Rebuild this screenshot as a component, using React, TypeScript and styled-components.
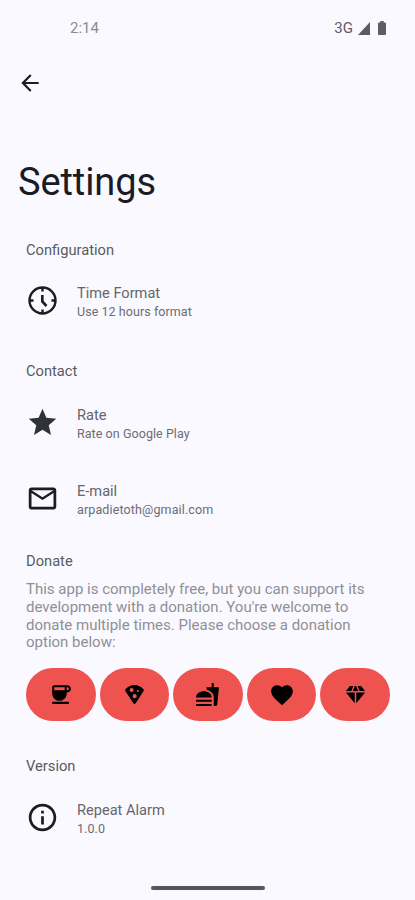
import React from "react";
import styled, { createGlobalStyle } from "styled-components";
import {
  MdArrowBack,
  MdStar,
  MdMailOutline,
  MdInfoOutline,
  MdCoffee,
  MdFastfood,
  MdFavorite,
} from "react-icons/md";

const GlobalStyle = createGlobalStyle`
  * { box-sizing: border-box; }
  body { margin: 0; background: #f9f9ff; }
  h1, h2, p { margin: 0; font-weight: 400; }
`;

const Screen = styled.main`
  width: 415px;
  height: 900px;
  display: flex;
  flex-direction: column;
  overflow: hidden;
  background: #f9f9ff;
  color: #191c24;
  font-family: Roboto, sans-serif;
`;

const StatusBar = styled.header`
  height: 56px;
  padding: 0 29px 0 70px;
  display: flex;
  align-items: center;
  justify-content: space-between;
  font-size: 15px;
  color: #8b8c90;
`;

const StatusIcons = styled.div`
  display: flex;
  align-items: center;
  gap: 8px;
  color: #5c5d62;
  svg { display: block; }
`;

const Network = styled.span`
  margin-right: -3px;
`;

const TopBar = styled.nav`
  height: 53px;
  padding-left: 17px;
  display: flex;
  align-items: center;
`;

const BackButton = styled.button`
  display: flex;
  padding: 0;
  border: 0;
  background: none;
  color: #1b1d25;
  cursor: pointer;
`;

const Title = styled.h1`
  margin-top: 47px;
  padding-left: 18px;
  height: 52px;
  font-size: 38px;
  line-height: 52px;
  letter-spacing: -0.1px;
`;

const SectionTitle = styled.h2<{ $top: number }>`
  margin-top: ${(p) => p.$top}px;
  padding-left: 26px;
  height: 20px;
  font-size: 14.7px;
  line-height: 20px;
  color: #5a5b60;
`;

const Item = styled.div<{ $top: number }>`
  margin-top: ${(p) => p.$top}px;
  height: 40px;
  padding-left: 26px;
  display: flex;
  align-items: center;
  gap: 18px;
`;

const ItemIcon = styled.span`
  width: 33px;
  display: flex;
  padding-bottom: 3px;
  svg { display: block; }
`;

const ItemTitle = styled.p`
  font-size: 14.6px;
  line-height: 19px;
  color: #65666b;
`;

const ItemDetail = styled.p<{ $spacing?: number }>`
  font-size: 12.5px;
  line-height: 17px;
  letter-spacing: ${(p) => p.$spacing ?? 0.06}px;
  color: #6c6d72;
`;

const Description = styled.p`
  margin-top: 10px;
  padding-left: 26px;
  height: 72px;
  font-size: 15px;
  line-height: 17.8px;
  color: #8f9095;
  white-space: nowrap;
`;

const DonationRow = styled.div`
  margin: 15px 25px 0 26px;
  display: grid;
  grid-template-columns: repeat(5, 1fr);
  gap: 4px;
`;

const DonationButton = styled.button`
  height: 53px;
  display: flex;
  align-items: center;
  justify-content: center;
  padding: 0;
  border: 0;
  border-radius: 27px;
  background: #ef5350;
  color: #000;
  cursor: pointer;
`;

const HomeIndicator = styled.div`
  width: 114px;
  height: 4px;
  margin: auto auto 10px 151px;
  border-radius: 2px;
  background: #55565a;
`;

const SignalIcon = () => (
  <svg width="12" height="13" viewBox="0 0 12 13" fill="currentColor">
    <path d="M12 0V13H0Z" />
  </svg>
);

const BatteryIcon = () => (
  <svg width="8" height="14" viewBox="0 0 8 14" fill="currentColor">
    <path d="M2.3 0h3.4v1.4H7a1 1 0 0 1 1 1V13a1 1 0 0 1-1 1H1a1 1 0 0 1-1-1V2.4a1 1 0 0 1 1-1h1.3z" />
  </svg>
);

const ClockIcon = () => (
  <svg width="33" height="33" viewBox="0 0 33 33" fill="none" stroke="#1b1d25">
    <circle cx="16.5" cy="16.5" r="13" strokeWidth="2.4" />
    <path d="M16.5 3v4.5M16.5 25.5v4.5M3 16.5h4.5M25.5 16.5h4.5" strokeWidth="2.4" />
    <path d="M16.3 11v6.4l4.2 4.6" strokeWidth="2.6" />
  </svg>
);

const PizzaIcon = ({ size }: { size: number }) => (
  <svg width={size} height={size} viewBox="0 0 24 24" fill="currentColor">
    <path
      fillRule="evenodd"
      d="M2.6 6.6C5 3.7 8.3 2 12 2s7 1.700 9.400 4.600c.5.600.4 1.100.1 1.700L13.400 20.900c-.7 1.200-2.100 1.200-2.800 0L2.500 8.300c-.3-.6-.4-1.100.1-1.700zM9 5.200a2.100 2.100 0 1 0 0 4.200 2.100 2.100 0 0 0 0-4.200zM12.200 11.600a2.200 2.200 0 1 0 0 4.400 2.200 2.200 0 0 0 0-4.400zM15.500 7.200a1.100 1.100 0 1 0 0 2.200 1.100 1.100 0 0 0 0-2.200z"
    />
  </svg>
);

const DiamondIcon = ({ size }: { size: number }) => (
  <svg width={size} height={size} viewBox="0 0 24 24" fill="currentColor">
    <path d="M6.200 3h3.500L7.700 8.300H2zM11.300 3h1.400l2.100 5.300H9.200zM14.300 3h3.500L22 8.300h-5.700zM2 10h9.200v11zM12.800 10H22l-9.200 11z" />
  </svg>
);

const donations = [
  { label: "Coffee", Icon: MdCoffee, size: 25 },
  { label: "Pizza", Icon: PizzaIcon, size: 23 },
  { label: "Fast food", Icon: MdFastfood, size: 25 },
  { label: "Heart", Icon: MdFavorite, size: 26 },
  { label: "Diamond", Icon: DiamondIcon, size: 23 },
];

interface SettingProps {
  top: number;
  icon: React.ReactNode;
  title: string;
  detail: string;
  spacing?: number;
}

const Setting = ({ top, icon, title, detail, spacing }: SettingProps) => (
  <Item $top={top}>
    <ItemIcon>{icon}</ItemIcon>
    <div>
      <ItemTitle>{title}</ItemTitle>
      <ItemDetail $spacing={spacing}>{detail}</ItemDetail>
    </div>
  </Item>
);

export default function App() {
  return (
    <>
      <GlobalStyle />
      <Screen>
        <StatusBar>
          <span>2:14</span>
          <StatusIcons>
            <Network>3G</Network>
            <SignalIcon />
            <BatteryIcon />
          </StatusIcons>
        </StatusBar>
        <TopBar>
          <BackButton aria-label="Back">
            <MdArrowBack size={26} />
          </BackButton>
        </TopBar>
        <Title>Settings</Title>
        <SectionTitle $top={32}>Configuration</SectionTitle>
        <Setting top={22} icon={<ClockIcon />} title="Time Format" detail="Use 12 hours format" />
        <SectionTitle $top={39}>Contact</SectionTitle>
        <Setting top={23} icon={<MdStar size={33} color="#30323a" />} title="Rate" detail="Rate on Google Play" />
        <Setting
          top={36}
          icon={<MdMailOutline size={33} color="#1b1d25" />}
          title="E-mail"
          detail="arpadietoth@gmail.com"
          spacing={0.13}
        />
        <SectionTitle $top={31}>Donate</SectionTitle>
        <Description>
          This app is completely free, but you can support its
          <br />
          development with a donation. You're welcome to
          <br />
          donate multiple times. Please choose a donation
          <br />
          option below:
        </Description>
        <DonationRow>
          {donations.map(({ label, Icon, size }) => (
            <DonationButton key={label} aria-label={label}>
              <Icon size={size} />
            </DonationButton>
          ))}
        </DonationRow>
        <SectionTitle $top={35}>Version</SectionTitle>
        <Setting top={23} icon={<MdInfoOutline size={33} color="#1b1d25" />} title="Repeat Alarm" detail="1.0.0" />
        <HomeIndicator />
      </Screen>
    </>
  );
}
